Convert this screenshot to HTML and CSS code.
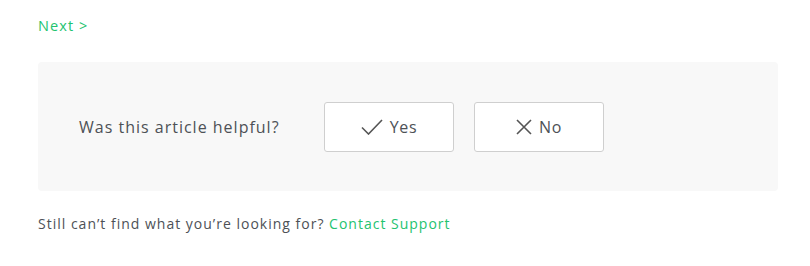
FILE: index.html
```html
<!DOCTYPE html>
<html>
<head>
<meta charset="utf-8">
<link rel="stylesheet" href="styles.css">
</head>
<body>
<div class="page">
  <a class="next" href="#">Next &gt;</a>
  <section class="feedback">
    <span class="question">Was this article helpful?</span>
    <div class="buttons">
      <button class="btn">
        <svg width="22" height="16" viewBox="0 0 22 16"><path d="M1 8.5 L7.5 15 L21 1" fill="none" stroke="#555" stroke-width="1.6"/></svg>
        <span>Yes</span>
      </button>
      <button class="btn">
        <svg width="16" height="16" viewBox="0 0 16 16"><path d="M1 1 L15 15 M15 1 L1 15" fill="none" stroke="#555" stroke-width="1.6"/></svg>
        <span>No</span>
      </button>
    </div>
  </section>
  <p class="still">Still can’t find what you’re looking for? <a href="#">Contact Support</a></p>
</div>
</body>
</html>
```
FILE: styles.css
```css
html, body { margin: 0; padding: 0; background: #fff; }
body { font-family: "Open Sans", "DejaVu Sans", sans-serif; color: #4d5156; }
.page { padding: 15px 32px 0 38px; }
a { color: #23c36f; text-decoration: none; }
.next { display: block; font-size: 14.5px; line-height: 22px; letter-spacing: 1.1px; }
.feedback {
  margin-top: 25px;
  background: #f8f8f8;
  border-radius: 4px;
  height: 129px;
  box-sizing: border-box;
  padding: 0 0 0 41px;
  display: flex;
  align-items: center;
}
.question { font-size: 16px; width: 245px; letter-spacing: 1px; }
.buttons { display: flex; gap: 20px; }
.btn {
  width: 130px; height: 50px;
  background: #fff;
  border: 1px solid #cfcfcf;
  border-radius: 3px;
  display: flex; align-items: center; justify-content: center; gap: 7px;
  font-family: inherit; font-size: 16px; color: #4d5156;
  padding: 0; letter-spacing: 0.6px;
}
.still { margin: 23px 0 0; font-size: 14px; line-height: 20px; letter-spacing: 1px; }
```
